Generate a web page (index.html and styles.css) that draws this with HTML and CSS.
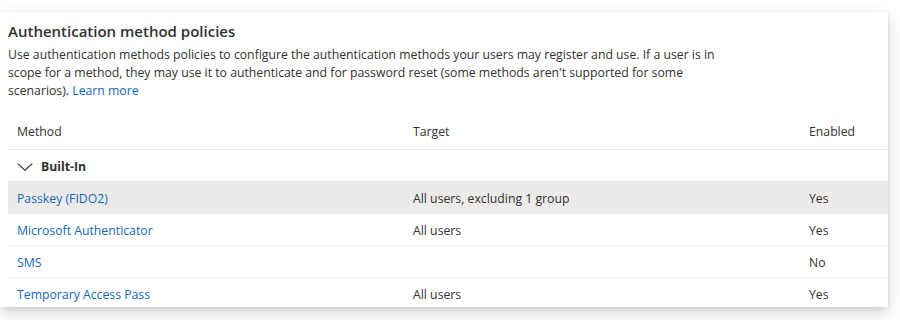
FILE: index.html
```
<!DOCTYPE html>
<html lang="en">
<head>
<meta charset="utf-8">
<title>Authentication method policies</title>
<link rel="stylesheet" href="styles.css">
</head>
<body>
<section class="card">
  <h2 class="title">Authentication method policies</h2>
  <p class="desc">Use authentication methods policies to configure the authentication methods your users may register and use. If a user is in scope for a method, they may use it to authenticate and for password reset (some methods aren't supported for some scenarios). <a href="#" class="link">Learn more</a></p>
  <div class="table">
    <div class="row head">
      <div class="cell">Method</div>
      <div class="cell">Target</div>
      <div class="cell">Enabled</div>
    </div>
    <div class="row group">
      <div class="cell group-cell">
        <svg class="chev" width="16" height="8" viewBox="0 0 16 8"><path d="M0.7 0.7 L8 7.2 L15.3 0.7" fill="none" stroke="#323130" stroke-width="1.1"/></svg>
        <span>Built-In</span>
      </div>
    </div>
    <div class="row selected">
      <div class="cell"><a href="#" class="link">Passkey (FIDO2)</a></div>
      <div class="cell">All users, excluding 1 group</div>
      <div class="cell">Yes</div>
    </div>
    <div class="row">
      <div class="cell"><a href="#" class="link">Microsoft Authenticator</a></div>
      <div class="cell">All users</div>
      <div class="cell">Yes</div>
    </div>
    <div class="row">
      <div class="cell"><a href="#" class="link">SMS</a></div>
      <div class="cell"></div>
      <div class="cell">No</div>
    </div>
    <div class="row">
      <div class="cell"><a href="#" class="link">Temporary Access Pass</a></div>
      <div class="cell">All users</div>
      <div class="cell">Yes</div>
    </div>
  </div>
</section>
</body>
</html>
```
FILE: styles.css
```
html, body {
  margin: 0;
  background: #ffffff;
}
body {
  font-family: "Open Sans", sans-serif;
  font-size: 12.25px;
  color: #323130;
  width: 900px;
  height: 320px;
  overflow: hidden;
}
.card {
  margin-top: 12px;
  width: 888px;
  height: 295px;
  overflow: hidden;
  background: #ffffff;
  box-shadow: 0 6px 14px rgba(0, 0, 0, 0.17), 0 1.2px 3.6px rgba(0, 0, 0, 0.11);
  padding: 9px 0 0 8px;
  box-sizing: border-box;
}
.title {
  margin: 0 0 5px;
  font-size: 15px;
  font-weight: 600;
  line-height: 20px;
  color: #323130;
}
.desc {
  margin: 0;
  max-width: 725px;
  line-height: 18px;
}
.link {
  color: #0f69b8;
  text-decoration: none;
}
.table {
  margin-top: 13px;
}
.row {
  display: grid;
  grid-template-columns: 396px 396px 1fr;
  height: 32px;
  box-sizing: border-box;
  border-bottom: 1px solid #f3f2f1;
  align-items: center;
}
.row.head {
  height: 37px;
  border-bottom-color: #edebe9;
}
.row.group {
  grid-template-columns: 1fr;
  border-bottom-color: #edebe9;
}
.row.selected {
  background: #edebe9;
  border-bottom-color: #edebe9;
}
.cell {
  padding: 2px 0 0 9px;
  white-space: nowrap;
}
.head .cell {
  padding-top: 1px;
}
.group-cell {
  display: flex;
  align-items: center;
  gap: 8px;
  font-weight: 700;
}
.chev {
  display: block;
}
```
